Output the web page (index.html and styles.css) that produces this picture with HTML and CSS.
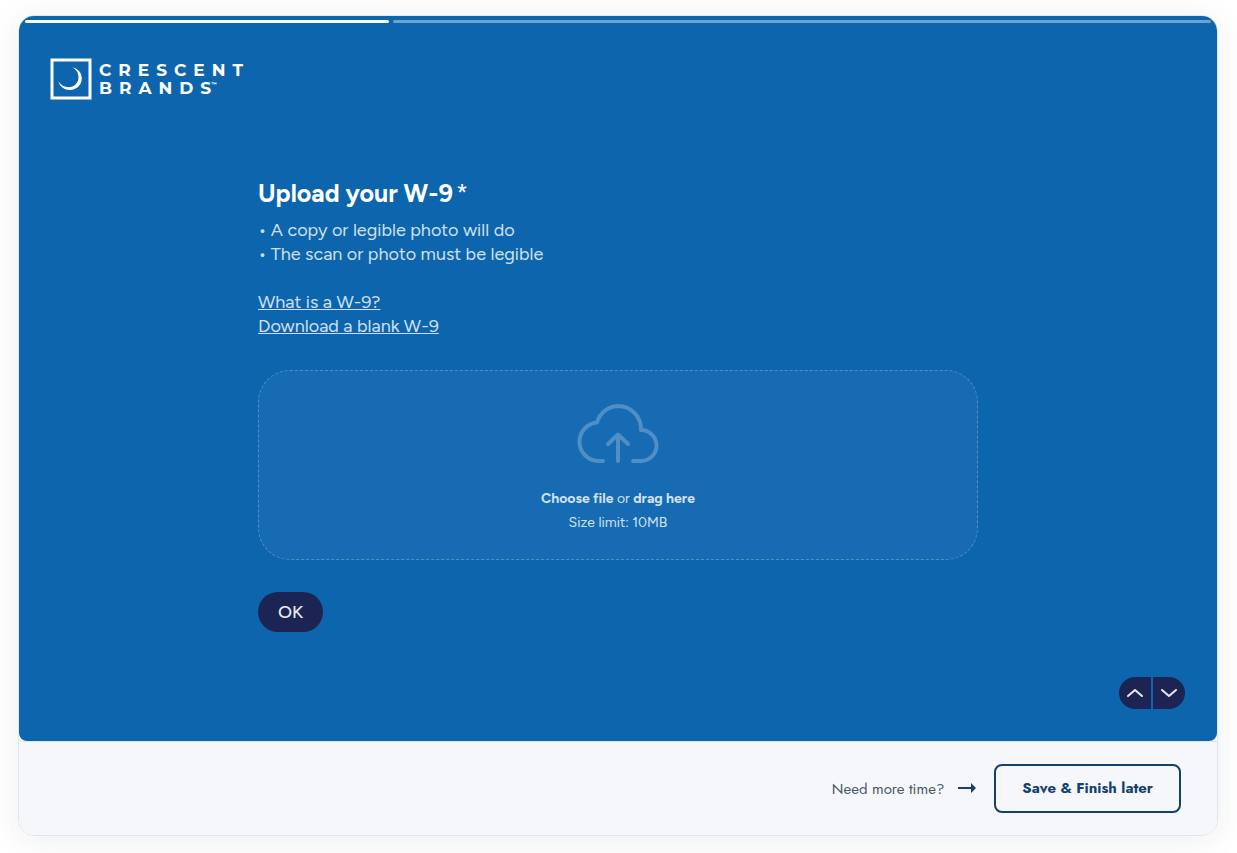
FILE: index.html
```html
<!DOCTYPE html>
<html lang="en">
<head>
    <meta charset="UTF-8">
    <meta name="viewport" content="width=device-width, initial-scale=1.0">
    <title>Crescent Brands - Upload your W-9</title>
    <link rel="stylesheet" href="styles.css">
</head>
<body>
    <div class="card">
        <main class="form-panel">
            <div class="progress">
                <div class="progress-done"></div>
                <div class="progress-left"></div>
            </div>

            <header class="logo">
                <svg class="logo-mark" width="42" height="42" viewBox="0 0 42 42" aria-hidden="true">
                    <rect x="2" y="2" width="38" height="38" fill="none" stroke="#fff" stroke-width="3"/>
                    <path fill="#fff" d="M22.500 9.500C28 10.500 31.800 15 31.800 20.500C31.800 27 26.500 32 20 32C14.500 32 10 29 8.500 23.500C11 27.500 14.500 29.200 18.500 29.200C24.500 29.200 28.500 24.800 28.500 19.200C28.500 15 26.500 11.500 22.500 9.500Z"/>
                </svg>
                <div class="logo-text">
                    <span>CRESCENT</span>
                    <span>BRAND<span class="logo-end">S<sup>™</sup></span></span>
                </div>
            </header>

            <form class="question">
                <h1>Upload your W-9<span class="required">*</span></h1>
                <ul class="hints">
                    <li>A copy or legible photo will do</li>
                    <li>The scan or photo must be legible</li>
                </ul>
                <div class="links">
                    <a href="#what">What is a W-9?</a>
                    <a href="#download">Download a blank W-9</a>
                </div>

                <label class="dropzone" for="w9File">
                    <input type="file" id="w9File" class="file-input">
                    <svg class="cloud" width="84" height="62" viewBox="0 0 84 62" aria-hidden="true">
                        <path d="M27 59h-5a19.300 19.300 0 0 1-1-38.500A22.500 22.500 0 0 1 42 4A23 23 0 0 1 65 28a15.500 15.500 0 0 1 0 31h-8"/>
                        <path d="M42 59V33M32 42l10-9.500L52 42"/>
                    </svg>
                    <span><b>Choose file</b> or <b>drag here</b></span>
                    <span>Size limit: 10MB</span>
                </label>

                <button type="submit" class="ok-button">OK</button>
            </form>

            <nav class="pager">
                <button type="button" aria-label="Previous question">
                    <svg width="16" height="10" viewBox="0 0 16 10"><path d="M1 8l7-6 7 6"/></svg>
                </button>
                <button type="button" aria-label="Next question">
                    <svg width="16" height="10" viewBox="0 0 16 10"><path d="M1 2l7 6 7-6"/></svg>
                </button>
            </nav>
        </main>

        <footer class="save-bar">
            <span>Need more time?</span>
            <svg class="arrow" width="18" height="12" viewBox="0 0 18 12" aria-hidden="true">
                <path d="M0 4h13V0l5 5-5 5V6H0z"/>
            </svg>
            <button type="button" class="save-button">Save &amp; Finish later</button>
        </footer>
    </div>
</body>
</html>
```
FILE: styles.css
```css
* {
    box-sizing: border-box;
}
body {
    margin: 0;
    padding: 15px 19px 17px 18px;
    background-color: #fff;
    font-family: Figtree, Lato, sans-serif;
}
button {
    font-family: inherit;
    cursor: pointer;
}
.card {
    max-width: 1200px;
    margin: 0 auto;
    border: 1px solid #e1e5ec;
    border-radius: 16px;
    box-shadow: 0 4px 32px rgba(20, 40, 60, 0.08);
    overflow: hidden;
}
.form-panel {
    display: flex;
    flex-direction: column;
    padding-bottom: 32px;
    border-radius: 0 0 8px 8px;
    background-color: #0d65ae;
    color: #fff;
}
.progress {
    display: grid;
    grid-template-columns: 4fr 9fr;
    gap: 4px;
    padding: 4px 6px 0;
}
.progress div {
    height: 3px;
    border-radius: 2px;
}
.progress-done {
    background-color: #fff;
}
.progress-left {
    background-color: #6ea3ce;
}
.logo {
    display: flex;
    align-items: center;
    gap: 7px;
    padding: 35px 31px 0;
}
.logo-text {
    display: flex;
    flex-direction: column;
    font-family: Montserrat, Figtree, Lato, sans-serif;
    font-size: 17px;
    font-weight: 700;
    line-height: 18px;
    letter-spacing: 7px;
}
.logo-end {
    letter-spacing: 0;
}
.logo-text sup {
    font-size: 5px;
    line-height: 0;
    vertical-align: 8px;
}
.question {
    width: 100%;
    max-width: 720px;
    margin: 77px auto 45px;
}
h1 {
    margin: 0 0 9px;
    font-size: 25px;
    line-height: 32px;
}
.required {
    margin-left: 3px;
    font-weight: 400;
}
.hints {
    margin: 0 0 24px;
    padding: 0;
    list-style: none;
}
.hints li::before {
    content: "•";
    margin-right: 4px;
}
.hints, .links {
    color: #cfe0ef;
    font-size: 18px;
    line-height: 24px;
}
.links {
    display: flex;
    flex-direction: column;
    align-items: flex-start;
}
.links a {
    color: inherit;
    text-underline-offset: 1px;
}
.dropzone {
    display: flex;
    flex-direction: column;
    align-items: center;
    margin: 32px 0;
    padding: 31px 24px 24px;
    border: 1px dashed #5090c6;
    border-radius: 32px;
    background-color: #176bb2;
    color: #d1e1f0;
    font-size: 14px;
    line-height: 24px;
    cursor: pointer;
}
.file-input {
    position: absolute;
    width: 1px;
    height: 1px;
    opacity: 0;
}
.cloud {
    margin-bottom: 23px;
    fill: none;
    stroke: #4f8fc5;
    stroke-width: 4;
    stroke-linecap: round;
    stroke-linejoin: round;
}
.ok-button {
    display: block;
    height: 40px;
    padding: 0 20px;
    border: none;
    border-radius: 20px;
    background-color: #1c2454;
    color: #e8e9ee;
    font-size: 18px;
    font-weight: 500;
}
.pager {
    display: flex;
    align-self: flex-end;
    gap: 2px;
    margin-right: 32px;
}
.pager button {
    display: flex;
    align-items: center;
    justify-content: center;
    width: 32px;
    height: 32px;
    padding: 0;
    border: none;
    border-radius: 16px 0 0 16px;
    background-color: #1c2454;
}
.pager button:last-child {
    border-radius: 0 16px 16px 0;
}
.pager path {
    fill: none;
    stroke: #e8e9ee;
    stroke-width: 2;
    stroke-linecap: round;
    stroke-linejoin: round;
}
.save-bar {
    display: flex;
    align-items: center;
    justify-content: flex-end;
    gap: 14px;
    padding: 22px 36px;
    border-top: 1px solid #e1e5ec;
    background-color: #f5f7fb;
    color: #4a5764;
    font-family: Jost, Lato, sans-serif;
    font-size: 15px;
}
.arrow {
    margin-right: 4px;
    fill: #173f6b;
}
.save-button {
    padding: 12px 26px;
    border: 2px solid #173f6b;
    border-radius: 8px;
    background-color: transparent;
    color: #173f6b;
    font-size: 15px;
    font-weight: 700;
    line-height: 21px;
}
```
